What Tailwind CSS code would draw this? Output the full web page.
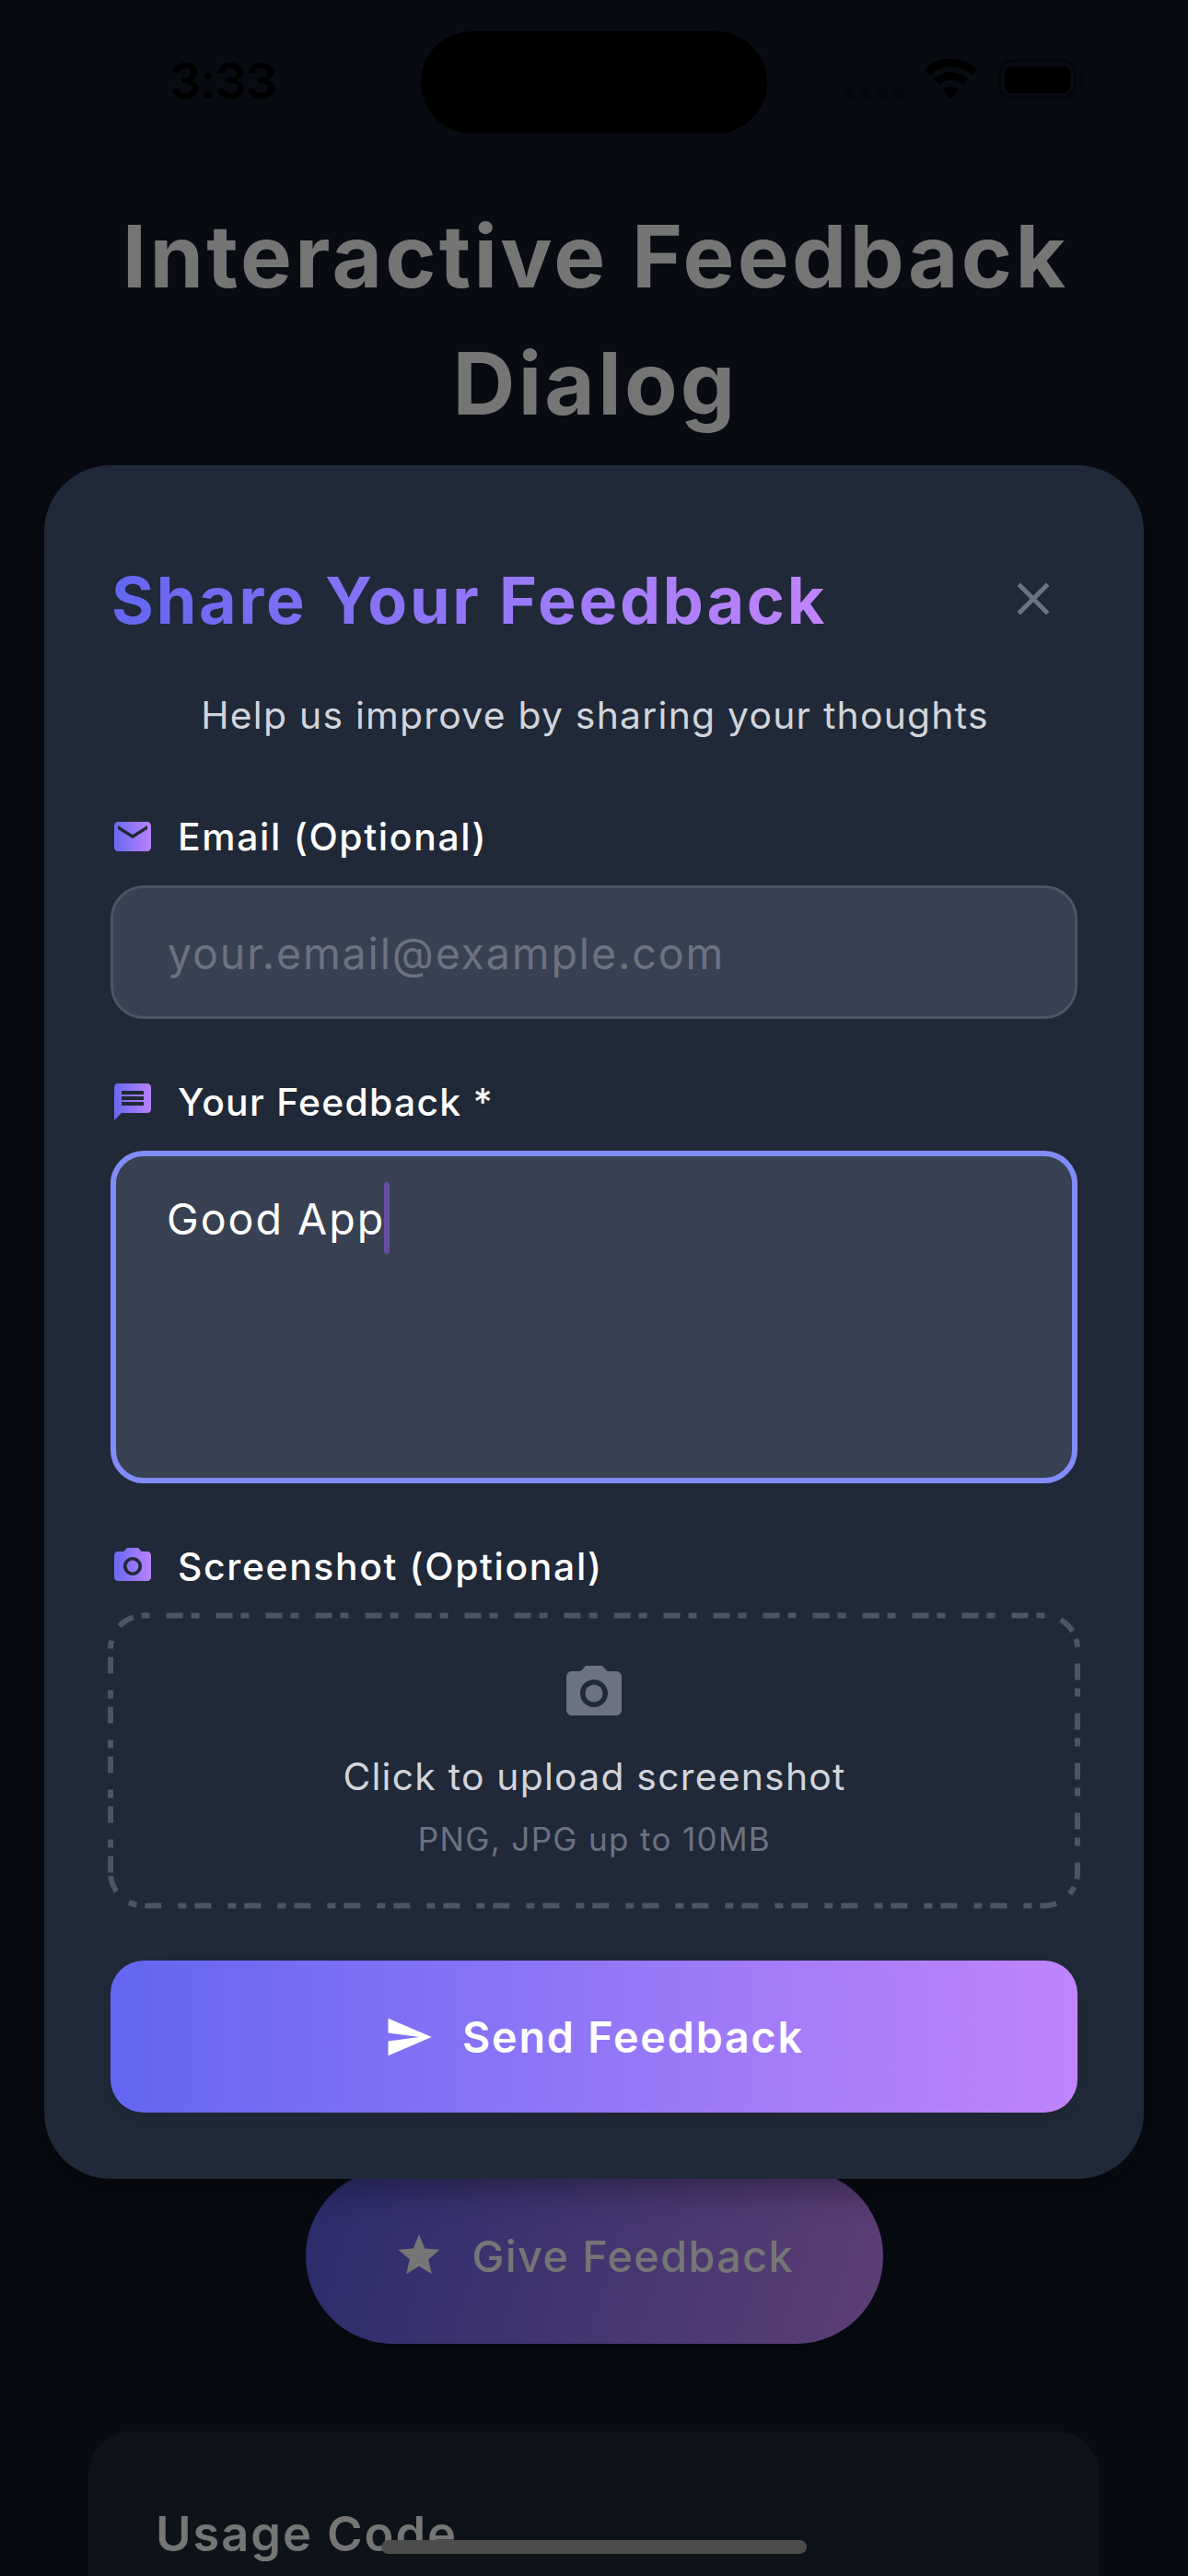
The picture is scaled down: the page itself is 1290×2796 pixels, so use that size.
<!DOCTYPE html>
<html lang="en">
<head>
<meta charset="utf-8">
<title>Interactive Feedback Dialog</title>
<script src="https://cdn.jsdelivr.net/npm/@tailwindcss/browser@4"></script>
</head>
<body class="bg-[#080b12] font-[Inter,sans-serif]">
<div class="relative w-[1290px] h-[2796px] overflow-hidden bg-[#080b12] flex flex-col whitespace-nowrap">

  <!-- Status bar -->
  <header class="h-[177px] shrink-0 flex items-start pt-[58px] pl-[184px] pr-[112px] justify-between text-black">
    <span class="text-[54px] leading-[60px] font-semibold tracking-[-1.05px]">3:33</span>
    <svg class="mt-[4px]" width="264" height="48" viewBox="0 0 264 48">
      <g fill="#05080c"><circle cx="7.5" cy="39" r="6"/><circle cx="25.500" cy="39" r="6"/><circle cx="43.500" cy="39" r="6"/><circle cx="61.500" cy="39" r="6"/></g>
      <g fill="none" stroke="#000" stroke-width="8.500">
        <path d="M93 16.500a36 36 0 0 1 51 0"/>
        <path d="M103 27a22 22 0 0 1 31 0"/>
      </g>
      <path d="M118.500 45l-9-9.500a13 13 0 0 1 18 0z" fill="#000"/>
      <rect x="171.500" y="4" width="82" height="40" rx="13" fill="none" stroke="#05070b" stroke-width="3"/>
      <rect x="177" y="10" width="71" height="29" rx="8" fill="#000"/>
      <path d="M258 18c6 2 6 11 0 13z" fill="#05070b"/>
    </svg>
  </header>

  <!-- Page behind the dialog -->
  <h1 class="mt-[32px] pl-[3px] text-center text-[94px] leading-[138px] font-bold tracking-[3.25px] text-[#757575]">Interactive Feedback<br>Dialog</h1>

  <div class="mt-[1869px] mx-auto w-[627px] h-[190px] shrink-0 rounded-full bg-linear-[107deg] from-[#2a2c6b] to-[#5d3e75] shadow-[0_6px_14px_rgba(0,0,0,0.25)] flex items-center pl-[96px] text-[#757575]">
    <svg class="mt-[-2px]" width="54" height="54" viewBox="0 0 24 24" fill="currentColor"><path d="M12 17.270L18.180 21l-1.640-7.030L22 9.240l-7.190-.61L12 2 9.190 8.630 2 9.240l5.460 4.730L5.820 21z"/></svg>
    <span class="ml-[31px] text-[46.6px] leading-[60px] font-medium tracking-[1.49px]">Give Feedback</span>
  </div>

  <section class="mt-[95px] mx-[96px] h-[300px] shrink-0 rounded-t-[48px] bg-[#0e1319] pt-[76px] pl-[73px]">
    <h2 class="text-[52.4px] leading-[70px] font-semibold tracking-[1.94px] text-[#757575]">Usage Code</h2>
  </section>

  <!-- Dialog -->
  <div class="absolute left-[48px] top-[505px] w-[1194px] h-[1860px] rounded-[72px] bg-[#202937] shadow-[0_12px_36px_rgba(0,0,0,0.32)] px-[72px] pt-[73px] flex flex-col">
    <div class="h-[144px] flex items-center justify-between">
      <h2 class="mt-[3px] ml-[1px] text-[70px] leading-[100px] font-bold tracking-[2.8px] text-transparent bg-clip-text bg-linear-to-r from-[#6366f1] to-[#c084fc]">Share Your Feedback</h2>
      <svg class="mr-[18px]" width="60" height="60" viewBox="0 0 24 24" fill="#6b7280"><path d="M19 6.410L17.590 5 12 10.590 6.410 5 5 6.410 10.590 12 5 17.590 6.410 19 12 13.410 17.590 19 19 17.590 13.410 12z"/></svg>
    </div>
    <p class="mt-[24px] pl-[2px] h-[61px] text-center text-[40.8px] leading-[61px] tracking-[1.27px] text-[#d1d5db]">Help us improve by sharing your thoughts</p>

    <div class="mt-[71px] h-[60px] flex items-center">
      <svg width="48" height="48" viewBox="0 0 24 24">
        <defs><linearGradient id="accent" gradientUnits="userSpaceOnUse" x1="0" y1="0" x2="24" y2="0"><stop stop-color="#6366f1"/><stop offset="1" stop-color="#c084fc"/></linearGradient></defs>
        <path fill="url(#accent)" d="M20 4H4c-1.100 0-1.990.9-1.990 2L2 18c0 1.100.9 2 2 2h16c1.100 0 2-.9 2-2V6c0-1.100-.9-2-2-2zm0 4l-8 5-8-5V6l8 5 8-5v2z"/>
      </svg>
      <span class="ml-[25px] text-[40.8px] leading-[60px] font-medium tracking-[1.7px] text-white">Email (Optional)</span>
    </div>
    <div class="mt-[23px] h-[145px] rounded-[36px] border-[3px] border-[#4b5563] bg-[#384151] pl-[59px] flex items-center">
      <span class="mt-[2px] text-[46.6px] leading-[60px] tracking-[1.83px] text-[#6b7280]">your.email@example.com</span>
    </div>

    <div class="mt-[60px] h-[60px] flex items-center">
      <svg width="48" height="48" viewBox="0 0 24 24"><path fill="url(#accent)" d="M20 2H4c-1.100 0-1.990.9-1.990 2L2 22l4-4h14c1.100 0 2-.9 2-2V4c0-1.100-.9-2-2-2zm-2 12H6v-2h12v2zm0-3H6V9h12v2zm0-3H6V6h12v2z"/></svg>
      <span class="ml-[25px] text-[40.8px] leading-[60px] font-medium tracking-[1.3px] text-white">Your Feedback *</span>
    </div>
    <div class="mt-[23px] h-[361px] rounded-[36px] border-[6px] border-[#818cf8] bg-[#384151] pl-[55px] pt-[28px] flex items-start">
      <span class="mt-[10px] w-[237px] text-[46.6px] leading-[60px] tracking-[1.96px] text-white">Good App</span>
      <span class="-ml-[1px] w-[6px] h-[78px] rounded-full bg-[#674ea3]"></span>
    </div>

    <div class="mt-[60px] h-[60px] flex items-center">
      <svg width="48" height="48" viewBox="0 0 24 24" fill="url(#accent)"><circle cx="12" cy="12" r="3.200"/><path d="M9 2L7.170 4H4c-1.100 0-2 .9-2 2v12c0 1.100.9 2 2 2h16c1.100 0 2-.9 2-2V6c0-1.100-.9-2-2-2h-3.170L15 2H9zm3 15c-2.760 0-5-2.240-5-5s2.240-5 5-5 5 2.240 5 5-2.240 5-5 5z"/></svg>
      <span class="ml-[25px] text-[40.8px] leading-[60px] font-medium tracking-[1.66px] text-white">Screenshot (Optional)</span>
    </div>
    <div class="relative mt-[23px] h-[316px] flex flex-col items-center pt-[49px]">
      <svg class="absolute inset-0 overflow-visible" width="1050" height="316" viewBox="0 0 1050 316" fill="none" stroke="#4b5563" stroke-width="6" stroke-dasharray="18 9 9 18"><path d="M0 279.500V36.500A36 36 0 0 1 36 .5H1014A36 36 0 0 1 1050 36.500V279.500A36 36 0 0 1 1014 315.500H36A36 36 0 0 1 0 279.500"/></svg>
      <svg width="72" height="72" viewBox="0 0 24 24" fill="#6b7280"><circle cx="12" cy="12" r="3.200"/><path d="M9 2L7.170 4H4c-1.100 0-2 .9-2 2v12c0 1.100.9 2 2 2h16c1.100 0 2-.9 2-2V6c0-1.100-.9-2-2-2h-3.170L15 2H9zm3 15c-2.760 0-5-2.240-5-5s2.240-5 5-5 5 2.240 5 5-2.240 5-5 5z"/></svg>
      <p class="mt-[24px] pl-[1px] text-[40.8px] leading-[61px] tracking-[1.26px] text-[#d1d5db]">Click to upload screenshot</p>
      <p class="mt-[11px] pl-[1px] text-[35px] leading-[52px] tracking-[1.34px] text-[#6b7280]">PNG, JPG up to 10MB</p>
    </div>

    <div class="mt-[59px] h-[165px] rounded-[36px] bg-linear-to-r from-[#6366f1] to-[#c084fc] shadow-[0_6px_14px_rgba(0,0,0,0.09)] flex items-center pl-[297px] text-white">
      <svg width="54" height="54" viewBox="0 0 24 24" fill="currentColor"><path d="M2.010 21L23 12 2.010 3 2 10l15 2-15 2z"/></svg>
      <span class="ml-[31px] text-[46.6px] leading-[60px] font-semibold tracking-[1.82px]">Send Feedback</span>
    </div>
  </div>

  <!-- Device chrome -->
  <div class="absolute left-[457px] top-[34px] w-[376px] h-[111px] rounded-full bg-black"></div>
  <div class="absolute left-[414px] top-[2757px] w-[462px] h-[15px] rounded-full bg-[#4c4c4c]"></div>
</div>
</body>
</html>
